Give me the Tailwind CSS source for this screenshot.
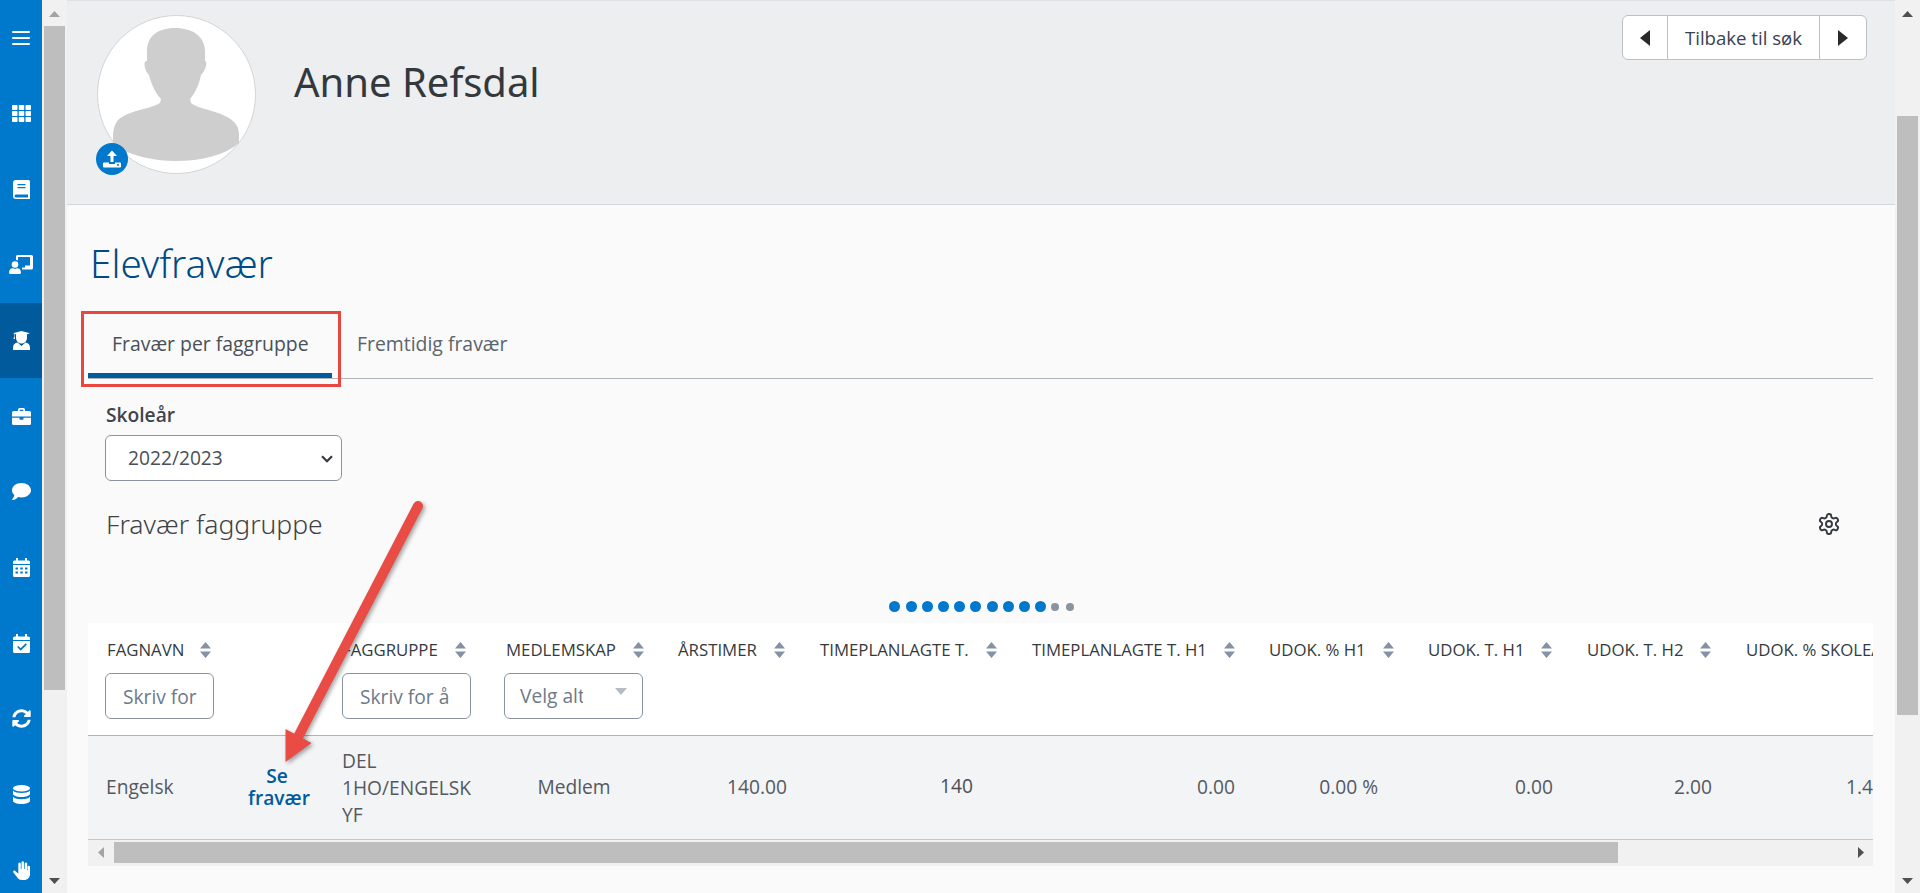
<!DOCTYPE html>
<html lang="no">
<head>
<meta charset="utf-8">
<script src="https://cdn.jsdelivr.net/npm/@tailwindcss/browser@4"></script>
<title>Elevfravær</title>
</head>
<body class="font-['Open_Sans',sans-serif] text-[19.2px] text-[#495057] bg-[#fafafa]">
<div class="flex h-[893px] w-[1920px] overflow-hidden">
  <!-- Sidebar -->
  <nav class="w-[42px] shrink-0 bg-[#0078cc] text-white flex flex-col overflow-hidden">
    <div class="h-[75.67px] shrink-0 flex items-center justify-center"><svg width="18" height="14" viewBox="0 0 18 14" fill="white"><rect y="0" width="18" height="2" rx="1"/><rect y="6" width="18" height="2" rx="1"/><rect y="12" width="18" height="2" rx="1"/></svg></div>
    <div class="h-[75.67px] shrink-0 flex items-center justify-center"><svg width="19" height="17" viewBox="0 0 19 17" fill="white"><rect width="5.5" height="5" rx=".8"/><rect x="6.75" width="5.5" height="5" rx=".8"/><rect x="13.5" width="5.5" height="5" rx=".8"/><rect y="6" width="5.5" height="5" rx=".8"/><rect x="6.75" y="6" width="5.5" height="5" rx=".8"/><rect x="13.5" y="6" width="5.5" height="5" rx=".8"/><rect y="12" width="5.5" height="5" rx=".8"/><rect x="6.75" y="12" width="5.5" height="5" rx=".8"/><rect x="13.5" y="12" width="5.5" height="5" rx=".8"/></svg></div>
    <div class="h-[75.67px] shrink-0 flex items-center justify-center"><svg width="17" height="19" viewBox="0 0 17 19" fill="white"><path d="M3 0h12.5a1.5 1.5 0 0 1 1.5 1.5v17.5H3a3 3 0 0 1-3-3V3a3 3 0 0 1 3-3zM4.500 4v1.300h8V4zm0 3v1.300h8V7zM3 14.500a1.500 1.500 0 0 0 0 3h12v-3z" fill-rule="evenodd"/></svg></div>
    <div class="h-[75.67px] shrink-0 flex items-center justify-center"><svg width="24" height="19" viewBox="0 0 24 19" fill="white"><path d="M7 1.500A1.500 1.500 0 0 1 8.500 0H22.500A1.500 1.500 0 0 1 24 1.500V13a1.500 1.500 0 0 1-1.500 1.500H13v-2h3V10.500h5V2H9v3.500a5 5 0 0 0-2-.5z"/><circle cx="6" cy="9.500" r="3.300"/><path d="M0 17.500c0-2.800 2-4.300 3.500-4.300.8 0 1.400.5 2.500.5s1.700-.5 2.500-.5c1.500 0 3.500 1.500 3.500 4.300 0 .9-.6 1.500-1.500 1.500h-9C.6 19 0 18.400 0 17.500z"/></svg></div>
    <div class="h-[75.67px] shrink-0 flex items-center justify-center bg-[#005a9c]"><svg width="17" height="19" viewBox="0 0 17 19" fill="white"><path d="M8.500 0L17 2.300 14 3.200V7a5.500 5.500 0 0 1-11 0V3.200L1.500 2.800V5.500l.5 2.500H.5L1 5.500V2.500L0 2.300z"/><path d="M4.500 11.500l4 3.500 4-3.500c2.500.2 4.500 2.300 4.500 5V19H0v-2.500c0-2.700 2-4.800 4.500-5z"/></svg></div>
    <div class="h-[75.67px] shrink-0 flex items-center justify-center"><svg width="19" height="17" viewBox="0 0 19 17" fill="white"><path d="M6 3V1.500A1.500 1.500 0 0 1 7.500 0h4A1.500 1.500 0 0 1 13 1.500V3h4.500A1.500 1.500 0 0 1 19 4.500V8.500H0V4.500A1.500 1.500 0 0 1 1.500 3zm1.800-1.200V3h3.400V1.800z" fill-rule="evenodd"/><path d="M0 9.700h7.500V11a.8.800 0 0 0 .8.800h2.400a.8.800 0 0 0 .8-.8V9.700H19v5.800a1.500 1.500 0 0 1-1.500 1.500h-16A1.500 1.500 0 0 1 0 15.500z"/></svg></div>
    <div class="h-[75.67px] shrink-0 flex items-center justify-center"><svg width="19" height="17" viewBox="0 0 19 17" fill="white"><path d="M9.500 0C14.750 0 19 3.200 19 7.200s-4.250 7.200-9.500 7.200c-1.200 0-2.300-.2-3.300-.5C5 15 3 17 .5 17c-.5 0-.6-.4-.3-.7C1.300 15 2 13.800 2.300 12 .9 10.800 0 9.100 0 7.200 0 3.200 4.250 0 9.500 0z"/></svg></div>
    <div class="h-[75.67px] shrink-0 flex items-center justify-center"><svg width="17" height="19" viewBox="0 0 17 19" fill="white"><path d="M3 0h2v2.500h7V0h2v2.500h1.500A1.500 1.500 0 0 1 17 4v2H0V4a1.500 1.500 0 0 1 1.500-1.500H3z"/><path fill-rule="evenodd" d="M0 7h17v10.500a1.500 1.500 0 0 1-1.500 1.500h-14A1.500 1.500 0 0 1 0 17.500zM2.500 9.500v2h2.500v-2zm4.800 0v2h2.500v-2zm4.700 0v2h2.500v-2zM2.500 13.500v2h2.500v-2zm4.800 0v2h2.500v-2zm4.700 0v2h2.500v-2z"/></svg></div>
    <div class="h-[75.67px] shrink-0 flex items-center justify-center"><svg width="17" height="19" viewBox="0 0 17 19" fill="white"><path d="M3 0h2v2.500h7V0h2v2.500h1.500A1.500 1.500 0 0 1 17 4v2H0V4a1.500 1.500 0 0 1 1.500-1.500H3z"/><path fill-rule="evenodd" d="M0 7h17v10.500a1.500 1.500 0 0 1-1.500 1.500h-14A1.500 1.500 0 0 1 0 17.500zM12.700 9.300l-5 5-2.400-2.400-1.200 1.200 3.600 3.600 6.200-6.200z"/></svg></div>
    <div class="h-[75.67px] shrink-0 flex items-center justify-center"><svg width="19" height="19" viewBox="0 0 512 512" fill="white"><path d="M370.720 133.280C339.458 104.008 298.888 87.962 255.848 88c-77.458.068-144.328 53.178-162.791 126.850-1.344 5.363-6.122 9.150-11.651 9.150H24.103c-7.498 0-13.194-6.807-11.807-14.176C33.933 94.924 134.813 8 256 8c66.448 0 126.791 26.136 171.315 68.685L463.030 40.970C478.149 25.851 504 36.559 504 57.941V192c0 13.255-10.745 24-24 24H345.941c-21.382 0-32.090-25.851-16.971-40.971l41.750-41.749zM32 296h134.059c21.382 0 32.090 25.851 16.971 40.971l-41.750 41.750c31.262 29.273 71.835 45.319 114.876 45.280 77.418-.070 144.315-53.144 162.787-126.849 1.344-5.363 6.122-9.150 11.651-9.150h57.304c7.498 0 13.194 6.807 11.807 14.176C478.067 417.076 377.187 504 256 504c-66.448 0-126.791-26.136-171.315-68.685L48.970 471.030C33.851 486.149 8 475.441 8 454.059V320c0-13.255 10.745-24 24-24z"/></svg></div>
    <div class="h-[75.67px] shrink-0 flex items-center justify-center"><svg width="17" height="19" viewBox="0 0 17 19" fill="white"><ellipse cx="8.500" cy="3.200" rx="8.500" ry="3.200"/><path d="M0 5.500C1.500 7.300 5 8 8.500 8s7-.7 8.500-2.500v3.200c0 1.800-3.800 3.200-8.500 3.200S0 10.500 0 8.700z"/><path d="M0 11.800c1.500 1.800 5 2.500 8.500 2.500s7-.7 8.500-2.500v4c0 1.800-3.800 3.200-8.500 3.200S0 17.600 0 15.800z"/></svg></div>
    <div class="h-[75.67px] shrink-0 flex items-center justify-center"><svg width="17" height="19" viewBox="0 0 17 19" fill="white"><path d="M5.300 2.500a1.300 1.300 0 0 1 2.500 0V8h.7V1.300a1.300 1.300 0 0 1 2.500 0V8h.7V2.500a1.300 1.300 0 0 1 2.500 0V9h.4V5.500a1.300 1.300 0 0 1 2.400 0V13c0 3.500-2.500 6-5.800 6H9c-2 0-3.400-.8-4.500-2.200L.4 11.500c-.9-1.200.8-2.700 1.900-1.600l3 2.800z"/></svg></div>
  </nav>

  <!-- Page scrollbar (left) -->
  <div class="w-[25px] shrink-0 bg-[#f1f1f1] flex flex-col items-center relative pt-[26px]">
    <svg class="absolute top-[11px] left-[7px]" width="11" height="6" viewBox="0 0 11 6"><path d="M5.500 0L11 6H0z" fill="#a3a3a3"/></svg>
    <div class="w-[21px] h-[664px] bg-[#bebebe]"></div>
    <svg class="absolute top-[878px] left-[7px]" width="11" height="6" viewBox="0 0 11 6"><path d="M5.500 6L11 0H0z" fill="#505050"/></svg>
  </div>

  <!-- Main -->
  <main class="w-[1828px] shrink-0 relative bg-[#fafafa]">
    <header class="h-[205px] bg-[#edeef0] border-b border-t border-b-[#d3d6da] border-t-[#dfe1e4] relative flex items-start pl-[30px] pt-[14px]">
      <div class="relative w-[159px] h-[159px] shrink-0">
        <svg width="159" height="159" viewBox="0 0 159 159">
          <circle cx="79.500" cy="79.500" r="79" fill="#ffffff" stroke="#d2d4d7" stroke-width="1"/>
          <path d="M78 13C60 13 50 22 50 36L50 46C46 45 47 55 52 60C55 72 60 80 64 84L63 88C55 94 25 96 19 108C17 112 16 116 16 120L16 130C35 142 60 146 78 146C105 146 128 140 142 128L142 120C142 114 140 110 136 106C125 96 100 94 94 88L93 84C98 78 102 70 104 60C109 55 111 46 108 46L108 36C108 22 96 13 78 13Z" fill="#cecece"/>
        </svg>
        <div class="absolute left-[-1px] top-[128px] w-[32px] h-[32px] rounded-full bg-[#0078cc] flex items-center justify-center">
          <svg width="20" height="20" viewBox="0 0 20 20" fill="white"><path d="M10 1.500l5 5.500h-3.500v6H8.500V7H5z"/><path d="M2 13.500h5v1.500h6v-1.500h5a1 1 0 0 1 1 1v3a1 1 0 0 1-1 1H2a1 1 0 0 1-1-1v-3a1 1 0 0 1 1-1z"/><circle cx="16" cy="16" r="1" fill="#0078cc"/></svg>
        </div>
      </div>
      <h1 class="ml-[38px] mt-[40px] font-['Noto_Sans',sans-serif] font-normal text-[40px] leading-[54px] text-[#33383d]">Anne Refsdal</h1>
      <div class="absolute top-[14px] right-[28px] flex h-[45px] bg-white border border-[#bcc1c7] rounded-[6px] text-[18.6px] text-[#3a4152]">
        <div class="w-[45px] flex items-center justify-center border-r border-[#bcc1c7]"><svg width="10" height="16" viewBox="0 0 10 16"><path d="M10 0v16L0 8z" fill="#2a2a2a"/></svg></div>
        <div class="w-[152px] flex items-center justify-center border-r border-[#bcc1c7]">Tilbake til søk</div>
        <div class="w-[46px] flex items-center justify-center"><svg width="10" height="16" viewBox="0 0 10 16"><path d="M0 0v16l10-8z" fill="#2a2a2a"/></svg></div>
      </div>
    </header>

    <section class="pl-[21px] pr-[22px]">
      <h2 class="mt-[33px] ml-[2px] h-[52px] font-['Noto_Sans',sans-serif] font-light text-[38.7px] leading-[50px] text-[#004b85]">Elevfravær</h2>

      <div class="relative mt-[21px] h-[68px] border-b border-[#adb5bd] flex items-start text-[19.4px]">
        <div class="w-[244px] h-[67px] border-b-[5px] border-[#005a9c] mb-[-1px] pl-[24px] pt-[21px] leading-[24px] text-[#495057]">Fravær per faggruppe</div>
        <div class="ml-[25px] pt-[21px] leading-[24px] text-[#5b646d]">Fremtidig fravær</div>
        <div class="absolute left-[-7px] top-0 w-[260px] h-[76px] border-[3px] border-[#e9463f]"></div>
      </div>

      <label class="block mt-[24px] ml-[18px] leading-[24px] font-semibold text-[#3f444a]">Skoleår</label>
      <div class="relative mt-[8px] ml-[17px] w-[237px] h-[46px]">
        <select class="appearance-none block w-full h-full pl-[22px] pr-[30px] bg-white border border-[#8a94a0] rounded-[6px] text-[#495057] text-[19.2px]"><option>2022/2023</option></select>
        <svg class="absolute right-[9px] top-[20px] pointer-events-none" width="12" height="8" viewBox="0 0 12 8" fill="none" stroke="#343a40" stroke-width="2.200"><path d="M1 1.200l5 5 5-5"/></svg>
      </div>

      <div class="relative mt-[25px] ml-[18px] h-[36px]">
        <h3 class="font-['Noto_Sans',sans-serif] font-light text-[26.5px] leading-[36px] text-[#3e4247]">Fravær faggruppe</h3>
        <svg class="absolute right-[32px] top-[6px]" width="24" height="24" viewBox="0 0 24 24" fill="none" stroke="#343a40" stroke-width="1.900" stroke-linecap="round" stroke-linejoin="round"><path d="M12.220 2h-.44a2 2 0 0 0-2 2v.18a2 2 0 0 1-1 1.730l-.43.25a2 2 0 0 1-2 0l-.15-.08a2 2 0 0 0-2.730.730l-.22.38a2 2 0 0 0 .730 2.730l.15.1a2 2 0 0 1 1 1.720v.51a2 2 0 0 1-1 1.740l-.15.09a2 2 0 0 0-.730 2.730l.22.38a2 2 0 0 0 2.730.730l.15-.08a2 2 0 0 1 2 0l.43.25a2 2 0 0 1 1 1.730V20a2 2 0 0 0 2 2h.44a2 2 0 0 0 2-2v-.18a2 2 0 0 1 1-1.730l.43-.25a2 2 0 0 1 2 0l.15.08a2 2 0 0 0 2.730-.730l.22-.39a2 2 0 0 0-.730-2.730l-.15-.08a2 2 0 0 1-1-1.740v-.5a2 2 0 0 1 1-1.740l.15-.09a2 2 0 0 0 .730-2.730l-.22-.38a2 2 0 0 0-2.730-.730l-.15.08a2 2 0 0 1-2 0l-.43-.25a2 2 0 0 1-1-1.730V4a2 2 0 0 0-2-2z"/><circle cx="12" cy="12" r="3"/></svg>
      </div>

      <div class="mt-[59px] h-[11px] pl-[2px] flex items-center justify-center gap-[5.200px]">
        <span class="w-[11px] h-[11px] rounded-full bg-[#0078cc]"></span><span class="w-[11px] h-[11px] rounded-full bg-[#0078cc]"></span><span class="w-[11px] h-[11px] rounded-full bg-[#0078cc]"></span><span class="w-[11px] h-[11px] rounded-full bg-[#0078cc]"></span><span class="w-[11px] h-[11px] rounded-full bg-[#0078cc]"></span><span class="w-[11px] h-[11px] rounded-full bg-[#0078cc]"></span><span class="w-[11px] h-[11px] rounded-full bg-[#0078cc]"></span><span class="w-[11px] h-[11px] rounded-full bg-[#0078cc]"></span><span class="w-[11px] h-[11px] rounded-full bg-[#0078cc]"></span><span class="w-[11px] h-[11px] rounded-full bg-[#0078cc]"></span><span class="w-[8px] h-[8px] rounded-full bg-[#8a94a0]"></span><span class="w-[8px] h-[8px] rounded-full bg-[#8a94a0] ml-[1px]"></span>
      </div>

      <div class="mt-[11px] w-[1785px] overflow-hidden">
        <table class="table-fixed border-collapse w-[1942px] max-w-none">
          <colgroup>
            <col class="w-[142px]"><col class="w-[96px]"><col class="w-[164px]"><col class="w-[172px]"><col class="w-[142px]"><col class="w-[212px]"><col class="w-[237px]"><col class="w-[159px]"><col class="w-[159px]"><col class="w-[159px]"><col class="w-[300px]">
          </colgroup>
          <thead class="bg-white">
            <tr class="h-[112px] border-b border-[#adb5bd] text-[16.8px] text-[#343a40] text-left">
              <th class="align-top font-normal pl-[17px] pt-[15px]">
                <div class="flex items-center gap-[16px] h-[24px] ml-[2px] whitespace-nowrap">FAGNAVN
                  <svg width="11" height="16" viewBox="0 0 11 16" fill="#8492a6"><path d="M5.500 0L11 6.500H0zM5.500 16L0 9.500h11z"/></svg></div>
                <input placeholder="Skriv for" class="block mt-[11px] w-[109px] h-[46px] pl-[17px] pr-[10px] bg-white border border-[#8a94a0] rounded-[6px] text-[19.2px] font-medium placeholder:text-[#6c7a89]">
              </th>
              <th></th>
              <th class="align-top font-normal pl-[16px] pt-[15px]">
                <div class="flex items-center gap-[17px] h-[24px] whitespace-nowrap">FAGGRUPPE
                  <svg width="11" height="16" viewBox="0 0 11 16" fill="#8492a6"><path d="M5.500 0L11 6.500H0zM5.500 16L0 9.500h11z"/></svg></div>
                <input placeholder="Skriv for å" class="block mt-[11px] w-[129px] h-[46px] pl-[17px] pr-[8px] bg-white border border-[#8a94a0] rounded-[6px] text-[19.2px] font-medium placeholder:text-[#6c7a89]">
              </th>
              <th class="align-top font-normal pl-[14px] pt-[15px]">
                <div class="flex items-center gap-[17px] h-[24px] ml-[2px] whitespace-nowrap">MEDLEMSKAP
                  <svg width="11" height="16" viewBox="0 0 11 16" fill="#8492a6"><path d="M5.500 0L11 6.500H0zM5.500 16L0 9.500h11z"/></svg></div>
                <div class="mt-[11px] w-[139px] h-[46px] pl-[15px] pr-[15px] bg-white border border-[#8a94a0] rounded-[6px] text-[19.2px] font-medium text-[#6c7a89] flex items-center justify-between">
                  <span class="block w-[63px] overflow-hidden whitespace-nowrap">Velg alternativ</span>
                  <svg class="mb-[10px]" width="12" height="7" viewBox="0 0 12 7" fill="#b4bcc5"><path d="M0 0h12L6 7z"/></svg>
                </div>
              </th>
              <th class="align-top font-normal pl-[16px] pt-[15px]"><div class="flex items-center gap-[17px] h-[24px] whitespace-nowrap">ÅRSTIMER <svg width="11" height="16" viewBox="0 0 11 16" fill="#8492a6"><path d="M5.500 0L11 6.500H0zM5.500 16L0 9.500h11z"/></svg></div></th>
              <th class="align-top font-normal pl-[16px] pt-[15px]"><div class="flex items-center gap-[17px] h-[24px] whitespace-nowrap">TIMEPLANLAGTE T. <svg width="11" height="16" viewBox="0 0 11 16" fill="#8492a6"><path d="M5.500 0L11 6.500H0zM5.500 16L0 9.500h11z"/></svg></div></th>
              <th class="align-top font-normal pl-[16px] pt-[15px]"><div class="flex items-center gap-[17px] h-[24px] whitespace-nowrap">TIMEPLANLAGTE T. H1 <svg width="11" height="16" viewBox="0 0 11 16" fill="#8492a6"><path d="M5.500 0L11 6.500H0zM5.500 16L0 9.500h11z"/></svg></div></th>
              <th class="align-top font-normal pl-[16px] pt-[15px]"><div class="flex items-center gap-[17px] h-[24px] whitespace-nowrap">UDOK. % H1 <svg width="11" height="16" viewBox="0 0 11 16" fill="#8492a6"><path d="M5.500 0L11 6.500H0zM5.500 16L0 9.500h11z"/></svg></div></th>
              <th class="align-top font-normal pl-[16px] pt-[15px]"><div class="flex items-center gap-[17px] h-[24px] whitespace-nowrap">UDOK. T. H1 <svg width="11" height="16" viewBox="0 0 11 16" fill="#8492a6"><path d="M5.500 0L11 6.500H0zM5.500 16L0 9.500h11z"/></svg></div></th>
              <th class="align-top font-normal pl-[16px] pt-[15px]"><div class="flex items-center gap-[17px] h-[24px] whitespace-nowrap">UDOK. T. H2 <svg width="11" height="16" viewBox="0 0 11 16" fill="#8492a6"><path d="M5.500 0L11 6.500H0zM5.500 16L0 9.500h11z"/></svg></div></th>
              <th class="align-top font-normal pl-[16px] pt-[15px]"><div class="flex items-center gap-[17px] h-[24px] whitespace-nowrap">UDOK. % SKOLEÅR</div></th>
            </tr>
          </thead>
          <tbody>
            <tr class="h-[104px] bg-[#f3f4f6] border-b border-[#c4c8cd] text-[#54595f]">
              <td class="pl-[18px]">Engelsk</td>
              <td class="text-center font-semibold leading-[22px] text-[#005a9c] pl-[18px] pr-[20px]">Se fravær</td>
              <td class="pl-[16px] pr-[10px] leading-[27px]">DEL 1HO/ENGELSK YF</td>
              <td class="text-center pr-[4px]">Medlem</td>
              <td class="text-right pr-[17px]">140.00</td>
              <td class="text-right pr-[43px] pb-[2px] font-medium text-[#4a4f55]">140</td>
              <td class="text-right pr-[18px]">0.00</td>
              <td class="text-right pr-[34px]">0.00 %</td>
              <td class="text-right pr-[18px]">0.00</td>
              <td class="text-right pr-[18px]">2.00</td>
              <td class="pl-[116px]">1.40</td>
            </tr>
          </tbody>
        </table>
      </div>
      <div class="w-[1785px] h-[26px] bg-[#f1f1f1] flex items-center">
        <div class="w-[26px] flex justify-center"><svg width="6" height="11" viewBox="0 0 6 11"><path d="M0 5.500L6 0v11z" fill="#a3a3a3"/></svg></div>
        <div class="w-[1504px] h-[21px] bg-[#bebebe]"></div>
        <div class="flex-1 flex justify-end pr-[9px]"><svg width="6" height="11" viewBox="0 0 6 11"><path d="M6 5.500L0 0v11z" fill="#505050"/></svg></div>
      </div>
    </section>

    <!-- Annotation arrow -->
    <svg class="absolute left-0 top-0 pointer-events-none" width="1828" height="893" viewBox="67 0 1828 893" fill="none">
      <g class="drop-shadow-[2px_2px_2px_rgba(0,0,0,0.35)]">
        <path d="M418 506L298 737" stroke="#e84c44" stroke-width="10" stroke-linecap="round"/>
        <path d="M285.500 762V729L311.500 743z" fill="#e84c44"/>
      </g>
    </svg>
  </main>

  <!-- Page scrollbar (right) -->
  <div class="w-[25px] shrink-0 bg-[#f1f1f1] relative pt-[116px] pl-[2px]">
    <svg class="absolute top-[11px] left-[7px]" width="11" height="6" viewBox="0 0 11 6"><path d="M5.500 0L11 6H0z" fill="#505050"/></svg>
    <div class="w-[21px] h-[599px] bg-[#bebebe]"></div>
    <svg class="absolute top-[878px] left-[7px]" width="11" height="6" viewBox="0 0 11 6"><path d="M5.500 6L11 0H0z" fill="#505050"/></svg>
  </div>
</div>
</body>
</html>
